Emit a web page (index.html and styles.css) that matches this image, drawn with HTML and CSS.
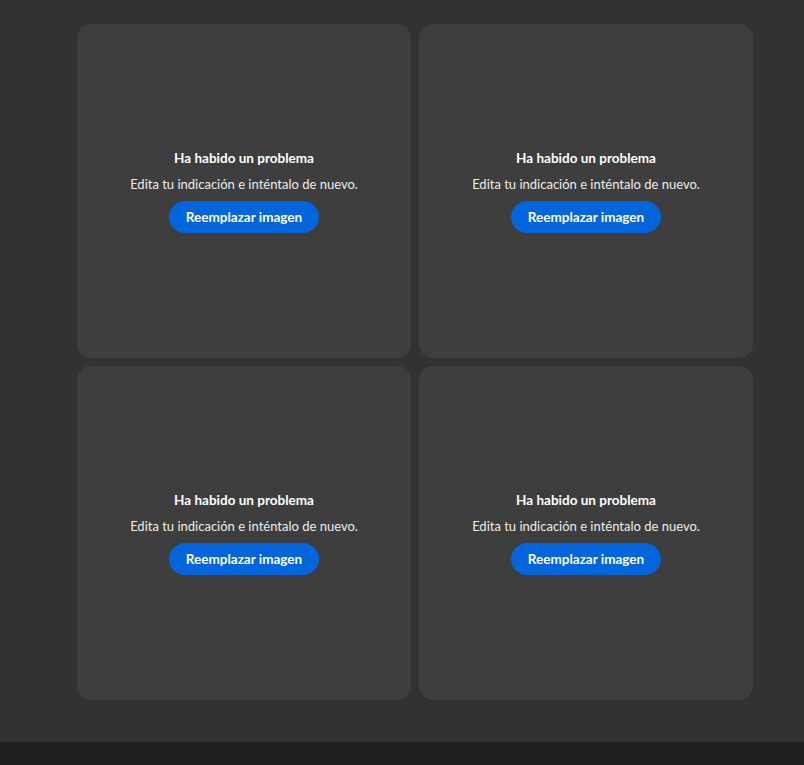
FILE: index.html
```html
<!DOCTYPE html>
<html lang="es">
<head>
<meta charset="utf-8">
<link rel="stylesheet" href="styles.css">
</head>
<body>
<main class="page">
  <div class="grid">
    <section class="card">
      <h2 class="title">Ha habido un problema</h2>
      <p class="desc">Edita tu indicación e inténtalo de nuevo.</p>
      <button class="btn">Reemplazar imagen</button>
    </section>
    <section class="card">
      <h2 class="title">Ha habido un problema</h2>
      <p class="desc">Edita tu indicación e inténtalo de nuevo.</p>
      <button class="btn">Reemplazar imagen</button>
    </section>
    <section class="card">
      <h2 class="title">Ha habido un problema</h2>
      <p class="desc">Edita tu indicación e inténtalo de nuevo.</p>
      <button class="btn">Reemplazar imagen</button>
    </section>
    <section class="card">
      <h2 class="title">Ha habido un problema</h2>
      <p class="desc">Edita tu indicación e inténtalo de nuevo.</p>
      <button class="btn">Reemplazar imagen</button>
    </section>
  </div>
</main>
<footer class="bottom"></footer>
</body>
</html>
```
FILE: styles.css
```css
html, body {
  margin: 0;
  padding: 0;
  height: 100%;
}
body {
  background: #323232;
  font-family: Lato, "Open Sans", sans-serif;
  display: flex;
  flex-direction: column;
}
.page {
  height: 742px;
  box-sizing: border-box;
  padding-top: 24px;
  padding-left: 77px;
}
.grid {
  display: grid;
  grid-template-columns: 334px 334px;
  grid-template-rows: 334px 334px;
  gap: 8px;
}
.card {
  background: #3e3e3e;
  border-radius: 14px;
  display: flex;
  flex-direction: column;
  align-items: center;
  justify-content: center;
  box-sizing: border-box;
}
.title {
  margin: 0;
  font-size: 13.5px;
  font-weight: 700;
  color: #ffffff;
  line-height: 18px;
}
.desc {
  margin: 8px 0 0;
  font-size: 13px;
  color: #ececec;
  line-height: 18px;
}
.btn {
  margin-top: 8px;
  height: 32px;
  width: 150px;
  border: none;
  border-radius: 16px;
  background: #0265dc;
  color: #fff;
  font-family: inherit;
  font-size: 13.5px;
  font-weight: 700;
  padding: 0;
}
.bottom {
  flex: 1;
  background: #1e1e1e;
}
```
